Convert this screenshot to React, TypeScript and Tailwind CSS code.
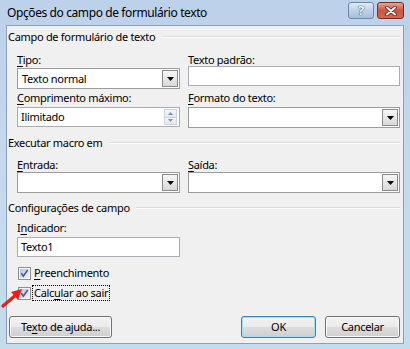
import React from "react";

function U({ children }: { children: React.ReactNode }) {
  return <span className="underline decoration-1 underline-offset-[2px]">{children}</span>;
}

function Header({ title }: { title: string }) {
  return (
    <div className="flex h-[14px] pl-[1px] pr-[3px] gap-[6px]">
      <span className="whitespace-nowrap leading-[14px]">{title}</span>
      <div className="flex-1 mt-[6px] h-[2px] border-t border-[#d5dce3] border-b-white border-b" />
    </div>
  );
}

function Label({ children }: { children: React.ReactNode }) {
  return <div className="h-[14px] leading-[14px] whitespace-nowrap">{children}</div>;
}

function DropBtn() {
  return (
    <div className="w-[16px] my-px mr-px border border-[#8a8a8a] bg-gradient-to-b from-[#f7f7f7] to-[#d9d9d9] flex items-center justify-center">
      <svg width="7" height="4" viewBox="0 0 7 4">
        <polygon points="0,0 7,0 3.5,4" fill="#000" />
      </svg>
    </div>
  );
}

function Select({ value, mt }: { value?: string; mt: string }) {
  return (
    <div className={`${mt} h-[21px] bg-white border border-[#9c9c9c] flex items-stretch`}>
      <div className="flex-1 pl-[4px] flex items-center leading-[14px]">{value}</div>
      <DropBtn />
    </div>
  );
}

function Input({ value, mt }: { value?: string; mt: string }) {
  return (
    <div className={`${mt} h-[20px] bg-white border border-[#a9adb3] flex items-center pl-[3px] leading-[14px]`}>
      {value}
    </div>
  );
}

function SpinInput({ value, mt }: { value: string; mt: string }) {
  return (
    <div className={`${mt} h-[20px] bg-white border border-[#a9adb3] flex items-stretch`}>
      <div className="flex-1 pl-[3px] flex items-center leading-[14px]">{value}</div>
      <div className="w-[13px] my-px mr-[2px] flex flex-col">
        <div className="flex-1 border border-[#ccd3dc] bg-gradient-to-b from-[#f4f6f9] to-[#e3e8ef] flex items-center justify-center">
          <svg width="5" height="3" viewBox="0 0 5 3">
            <polygon points="0,3 5,3 2.5,0" fill="#7d93b3" />
          </svg>
        </div>
        <div className="flex-1 border border-[#ccd3dc] border-t-0 bg-gradient-to-b from-[#f4f6f9] to-[#e3e8ef] flex items-center justify-center">
          <svg width="5" height="3" viewBox="0 0 5 3">
            <polygon points="0,0 5,0 2.5,3" fill="#7d93b3" />
          </svg>
        </div>
      </div>
    </div>
  );
}

function Check() {
  return (
    <svg width="13" height="13" viewBox="0 0 13 13" className="shrink-0">
      <defs>
        <linearGradient id="cbg" x1="0" y1="0" x2="1" y2="1">
          <stop offset="0" stopColor="#b7c3d6" />
          <stop offset="1" stopColor="#f1f4f8" />
        </linearGradient>
      </defs>
      <rect x="0.5" y="0.5" width="12" height="12" fill="#f6f6f6" stroke="#8e8f8f" />
      <rect x="2" y="2" width="9" height="9" fill="url(#cbg)" />
      <path d="M3.3 6.3 L5.4 9.2 L9.7 2.9" stroke="#40598e" strokeWidth="1.6" fill="none" />
    </svg>
  );
}

function Btn({ children, w, focused }: { children: React.ReactNode; w: string; focused?: boolean }) {
  return (
    <div
      className={`${w} h-[22px] rounded-[3px] border ${
        focused
          ? "border-[#3c7fb1] shadow-[inset_0_0_0_1px_#a7def6]"
          : "border-[#707070] shadow-[inset_0_0_0_1px_#fbfbfb]"
      } bg-[linear-gradient(#f2f2f2_0%,#ebebeb_50%,#dddddd_50%,#cfcfcf_100%)] flex items-center justify-center leading-[14px]`}
    >
      {children}
    </div>
  );
}

export default function App() {
  return (
    <div className="w-[410px] h-[349px] relative flex flex-col bg-gradient-to-b from-[#bcd1ea] via-[#c5d9ee] to-[#c3dcee] text-[11px] tracking-[-0.3px] text-black font-['Noto_Sans','Open_Sans',sans-serif] overflow-hidden">
      {/* title bar */}
      <div className="h-[25px] flex items-start pl-[7px] pr-[6px] shrink-0">
        <span className="mt-[5px] text-[12px] tracking-[-0.4px] leading-[16px] whitespace-nowrap">
          Opções do campo de formulário texto
        </span>
        <div className="ml-auto mt-[2px] flex gap-[3px]">
          <div className="w-[26px] h-[17px] rounded-[3px] border border-[#6b86aa] bg-gradient-to-b from-[#e1eaf5] via-[#bed1e8] to-[#a8c0de] flex items-center justify-center">
            <span className="text-[13px] leading-[13px] font-bold text-[#f4f8fc] [text-shadow:0_0_1px_#1d3554,0_0_1px_#1d3554]">
              ?
            </span>
          </div>
          <div className="w-[27px] h-[17px] rounded-[3px] border border-[#7a2c22] bg-gradient-to-b from-[#e5a393] via-[#cb5640] to-[#d8664a] flex items-center justify-center">
            <svg width="12" height="10" viewBox="0 0 12 10">
              <path d="M2 1.5 L10 8.5 M10 1.5 L2 8.5" stroke="#4a1a14" strokeWidth="3.6" strokeLinecap="round" />
              <path d="M2 1.5 L10 8.5 M10 1.5 L2 8.5" stroke="#ffffff" strokeWidth="2" strokeLinecap="round" />
            </svg>
          </div>
        </div>
      </div>

      {/* body */}
      <div className="mx-[6px] mb-[5px] flex-1 border border-[#8aa0bc] bg-[#f0f0f0] flex flex-col pt-[4px]">
        <Header title="Campo de formulário de texto" />

        <div className="mt-[9px] pl-[10px] pr-[3px] grid grid-cols-[163px_212px] gap-x-[8px] gap-y-[2px] items-start">
          <div className="flex flex-col">
            <Label>
              <U>T</U>ipo:
            </Label>
            <Select value="Texto normal" mt="mt-[1px]" />
          </div>
          <div className="flex flex-col">
            <Label>
              Tex<U>t</U>o padrão:
            </Label>
            <Input mt="-mt-[1px]" />
          </div>
          <div className="flex flex-col">
            <Label>
              <U>C</U>omprimento máximo:
            </Label>
            <SpinInput value="Ilimitado" mt="mt-[2px]" />
          </div>
          <div className="flex flex-col">
            <Label>
              <U>F</U>ormato do texto:
            </Label>
            <Select mt="mt-[2px]" />
          </div>
        </div>

        <div className="mt-[8px]">
          <Header title="Executar macro em" />
        </div>

        <div className="mt-[8px] pl-[10px] pr-[3px] grid grid-cols-[163px_212px] gap-x-[8px]">
          <div className="flex flex-col">
            <Label>
              <U>E</U>ntrada:
            </Label>
            <Select mt="mt-0" />
          </div>
          <div className="flex flex-col">
            <Label>
              <U>S</U>aída:
            </Label>
            <Select mt="mt-0" />
          </div>
        </div>

        <div className="mt-[8px]">
          <Header title="Configurações de campo" />
        </div>

        <div className="mt-[6px] pl-[10px] w-[173px] flex flex-col">
          <Label>
            I<U>n</U>dicador:
          </Label>
          <Input value="Texto1" mt="mt-[2px]" />
        </div>

        <div className="mt-[9px] pl-[11px] h-[14px] flex items-center">
          <Check />
          <span className="ml-[3px] leading-[14px]">
            <U>P</U>reenchimento
          </span>
        </div>

        <div className="mt-[5px] pl-[11px] h-[16px] flex items-center">
          <Check />
          <span className="ml-[1px] h-[16px] pl-[1px] pr-[1px] border border-dotted border-black leading-[14px] whitespace-nowrap">
            Calc<U>u</U>lar ao sair
          </span>
        </div>

        <div className="mt-[15px] pl-[2px] pr-[3px] flex items-center">
          <Btn w="w-[103px]">
            Te<U>x</U>to de ajuda...
          </Btn>
          <div className="ml-auto flex gap-[9px]">
            <Btn w="w-[75px]" focused>
              OK
            </Btn>
            <Btn w="w-[75px]">Cancelar</Btn>
          </div>
        </div>
      </div>

      {/* red arrow annotation */}
      <svg className="absolute left-0 top-[285px]" width="26" height="24" viewBox="0 0 26 24">
        <path d="M3 21 L15 10.8" stroke="#e8201c" strokeWidth="3.4" strokeLinecap="round" />
        <polygon points="22,4 11,7 18,15" fill="#e8201c" />
      </svg>
    </div>
  );
}
